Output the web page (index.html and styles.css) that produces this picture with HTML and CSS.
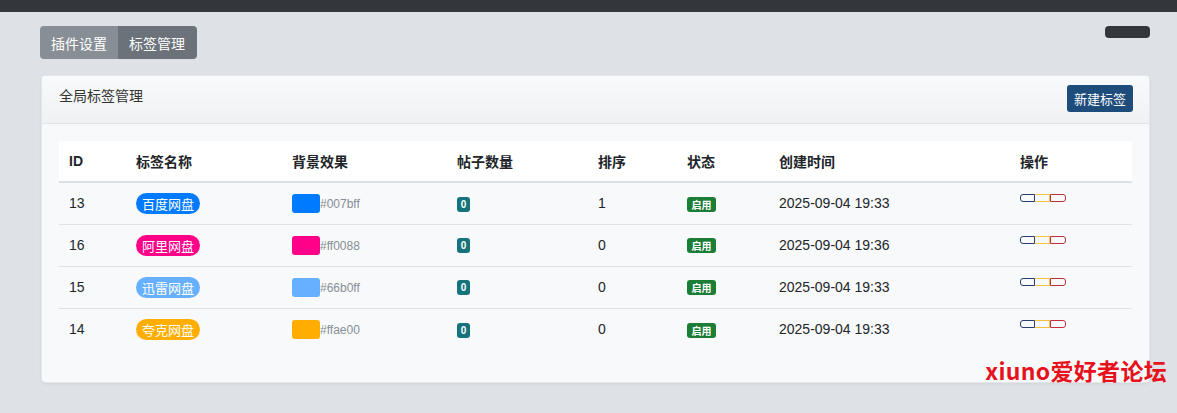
FILE: index.html
```html
<!DOCTYPE html>
<html lang="zh-CN">
<head>
<meta charset="utf-8">
<title>标签管理</title>
<link rel="stylesheet" href="styles.css">
</head>
<body>
<div class="topbar"></div>
<div class="page">
  <div class="toolbar">
    <div class="btn-group">
      <a class="tab tab-light">插件设置</a>
      <a class="tab tab-dark">标签管理</a>
    </div>
    <span class="dark-pill"></span>
  </div>
  <div class="card">
    <div class="card-header">
      <span class="card-title">全局标签管理</span>
      <button class="btn-new">新建标签</button>
    </div>
    <div class="card-body">
      <table class="tbl">
        <thead>
          <tr>
            <th class="c-id">ID</th>
            <th class="c-name">标签名称</th>
            <th class="c-bg">背景效果</th>
            <th class="c-count">帖子数量</th>
            <th class="c-sort">排序</th>
            <th class="c-status">状态</th>
            <th class="c-time">创建时间</th>
            <th class="c-ops">操作</th>
          </tr>
        </thead>
        <tbody>
          <tr>
            <td>13</td>
            <td><span class="tag" style="background:#007bff">百度网盘</span></td>
            <td><span class="swatch" style="background:#007bff"></span><span class="hex">#007bff</span></td>
            <td><span class="count">0</span></td>
            <td>1</td>
            <td><span class="status">启用</span></td>
            <td>2025-09-04 19:33</td>
            <td><span class="ops"><i class="op op-edit"></i><i class="op op-warn"></i><i class="op op-del"></i></span></td>
          </tr>
          <tr>
            <td>16</td>
            <td><span class="tag" style="background:#ff0088">阿里网盘</span></td>
            <td><span class="swatch" style="background:#ff0088"></span><span class="hex">#ff0088</span></td>
            <td><span class="count">0</span></td>
            <td>0</td>
            <td><span class="status">启用</span></td>
            <td>2025-09-04 19:36</td>
            <td><span class="ops"><i class="op op-edit"></i><i class="op op-warn"></i><i class="op op-del"></i></span></td>
          </tr>
          <tr>
            <td>15</td>
            <td><span class="tag" style="background:#66b0ff">迅雷网盘</span></td>
            <td><span class="swatch" style="background:#66b0ff"></span><span class="hex">#66b0ff</span></td>
            <td><span class="count">0</span></td>
            <td>0</td>
            <td><span class="status">启用</span></td>
            <td>2025-09-04 19:33</td>
            <td><span class="ops"><i class="op op-edit"></i><i class="op op-warn"></i><i class="op op-del"></i></span></td>
          </tr>
          <tr>
            <td>14</td>
            <td><span class="tag" style="background:#ffae00">夸克网盘</span></td>
            <td><span class="swatch" style="background:#ffae00"></span><span class="hex">#ffae00</span></td>
            <td><span class="count">0</span></td>
            <td>0</td>
            <td><span class="status">启用</span></td>
            <td>2025-09-04 19:33</td>
            <td><span class="ops"><i class="op op-edit"></i><i class="op op-warn"></i><i class="op op-del"></i></span></td>
          </tr>
        </tbody>
      </table>
    </div>
  </div>
</div>
<div class="watermark">xiuno爱好者论坛</div>
</body>
</html>
```

FILE: styles.css
```css
* { box-sizing: border-box; }
html, body { margin: 0; padding: 0; }
body {
  background: #dee1e5;
  font-family: "Liberation Sans", "Noto Sans CJK SC", sans-serif;
  font-size: 14px;
  color: #212529;
  height: 413px;
  overflow: hidden;
  position: relative;
}
.topbar { height: 12px; background: #33363b; }
.page { padding: 14px 27px 0 40px; }
.toolbar { display: flex; justify-content: space-between; align-items: flex-start; margin-bottom: 16px; }
.btn-group { display: flex; border-radius: 4px; overflow: hidden; height: 33px; }
.tab {
  display: flex; align-items: center; padding: 0 11px;
  color: #fff; font-size: 14px;
  font-family: "Noto Sans CJK SC", sans-serif;
}
.tab-light { background: #878e95; width: 78px; }
.tab-dark { background: #6b7279; width: 79px; }
.dark-pill { width: 45px; height: 12px; background: #33363b; border-radius: 4px; }

.card {
  background: #f8f9fa;
  border: 1px solid #e3e6ea;
  border-radius: 4px;
  box-shadow: 0 1px 3px rgba(0,0,0,0.06);
  margin-left: 1px;
}
.card-header {
  display: flex; justify-content: space-between; align-items: flex-start;
  height: 48px; padding: 9px 16px 0 17px;
  background: linear-gradient(#f9fafb, #eff1f3);
  border-bottom: 1px solid #e1e4e8;
  border-radius: 4px 4px 0 0;
}
.card-title { line-height: 20px; font-family: "Noto Sans CJK SC", sans-serif; font-size: 14px; color: #333; }
.btn-new {
  height: 27px; padding: 0 7px; border: none; border-radius: 3px;
  background: #1e4c7b; color: #fff; font-size: 13px;
  font-family: "Noto Sans CJK SC", sans-serif;
}
.card-body { padding: 17px 17px 32px 17px; }

.tbl { width: 100%; border-collapse: collapse; }
.tbl th {
  background: #fff; text-align: left; font-weight: bold;
  height: 41px; padding: 0 10px; border-bottom: 2px solid #dcdfe3;
  font-family: "Liberation Sans", "Noto Sans CJK SC", sans-serif;
}
.tbl td {
  height: 42px; padding: 0 10px; border-top: 1px solid #dfe2e6;
  vertical-align: middle;
}
.tbl tbody tr:first-child td { border-top: none; }
.c-id { width: 67px; }
.c-name { width: 156px; }
.c-bg { width: 165px; }
.c-count { width: 141px; }
.c-sort { width: 89px; }
.c-status { width: 92px; }
.c-time { width: 241px; }

.tag {
  display: inline-block; height: 21px; line-height: 21px; padding: 0 6px;
  border-radius: 11px; color: #fff; font-size: 13px;
  font-family: "Noto Sans CJK SC", sans-serif;
}
.swatch { display: inline-block; width: 28px; height: 19px; border-radius: 3px; vertical-align: middle; }
.hex { color: #868e96; font-size: 12px; vertical-align: middle; }
.count {
  display: inline-block; width: 13px; height: 15px; line-height: 15px; text-align: center;
  background: #17737b; color: #fff; font-size: 10px; font-weight: bold; border-radius: 3px;
  vertical-align: middle;
}
.status {
  display: inline-block; width: 29px; height: 15px; line-height: 15px; text-align: center;
  background: #1c7d37; color: #fff; font-size: 10px; font-weight: bold; border-radius: 3px;
  font-family: "Noto Sans CJK SC", sans-serif;
  vertical-align: middle;
}
.ops { display: inline-flex; position: relative; top: -6px; }
.op { display: block; width: 15px; height: 8px; border: 1px solid; }
.op-edit { border-color: #2b3f6e; border-radius: 3px 0 0 3px; }
.op-warn { border-color: #f3c245; border-left: none; width: 15px; }
.op-del { border-color: #c0303c; border-radius: 0 3px 3px 0; width: 16px; }

.watermark {
  position: absolute; right: 10px; bottom: 31px;
  color: #e6121c; font-size: 23px; font-weight: bold;
  font-family: "Noto Sans CJK SC", sans-serif;
  letter-spacing: 0.3px;
  line-height: 24px;
}
```
